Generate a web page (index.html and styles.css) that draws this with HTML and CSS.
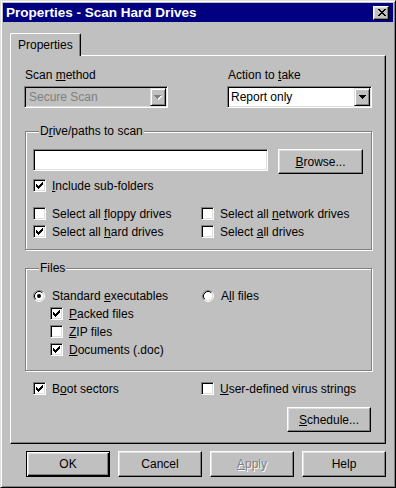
FILE: index.html
```html
<!DOCTYPE html>
<html>
<head>
<meta charset="utf-8">
<title>Properties - Scan Hard Drives</title>
<link rel="stylesheet" href="styles.css">
</head>
<body>
<div class="window">
  <div class="titlebar">
    <span class="title">Properties - Scan Hard Drives</span>
    <span class="close"><svg width="8" height="7" viewBox="0 0 8 7" shape-rendering="crispEdges"><path d="M0 0h2v1H0zM6 0h2v1H6zM1 1h2v1H1zM5 1h2v1H5zM2 2h4v1H2zM3 3h2v1H3zM2 4h4v1H2zM1 5h2v1H1zM5 5h2v1H5zM0 6h2v1H0zM6 6h2v1H6z" fill="#000"/></svg></span>
  </div>
  <div class="client">
    <div class="tabs"><div class="tab">Properties</div></div>
    <div class="panel">
      <div class="toprow">
        <div class="field f1">
          <div class="lbl">Scan <u>m</u>ethod</div>
          <div class="combo disabled">
            <span class="val">Secure Scan</span>
            <span class="arrow"><svg width="8" height="5" viewBox="0 0 8 5" shape-rendering="crispEdges"><path d="M1 1h7v1H1zM2 2h5v1H2zM3 3h3v1H3zM4 4h1v1H4z" fill="#fff"/><path d="M0 0h7v1H0zM1 1h5v1H1zM2 2h3v1H2zM3 3h1v1H3z" fill="#808080"/></svg></span>
          </div>
        </div>
        <div class="field f2">
          <div class="lbl">Action to <u>t</u>ake</div>
          <div class="combo">
            <span class="val">Report only</span>
            <span class="arrow"><svg width="7" height="4" viewBox="0 0 7 4" shape-rendering="crispEdges"><path d="M0 0h7v1H0zM1 1h5v1H1zM2 2h3v1H2zM3 3h1v1H3z" fill="#000"/></svg></span>
          </div>
        </div>
      </div>

      <div class="group drive">
        <div class="legend">D<u>r</u>ive/paths to scan</div>
        <div class="pathrow">
          <div class="textbox"></div>
          <div class="btn browse"><u>B</u>rowse...</div>
        </div>
        <div class="check sub"><span class="cb on"><svg width="7" height="7" viewBox="0 0 7 7" shape-rendering="crispEdges"><path d="M0 2h1v3H0zM1 3h1v3H1zM2 4h1v3H2zM3 3h1v3H3zM4 2h1v3H4zM5 1h1v3H5zM6 0h1v3H6z" fill="#000"/></svg></span><span class="txt"><u>I</u>nclude sub-folders</span></div>
        <div class="grid drives">
          <div class="check"><span class="cb"></span><span class="txt">Select all <u>f</u>loppy drives</span></div>
          <div class="check"><span class="cb"></span><span class="txt">Select all <u>n</u>etwork drives</span></div>
          <div class="check"><span class="cb on"><svg width="7" height="7" viewBox="0 0 7 7" shape-rendering="crispEdges"><path d="M0 2h1v3H0zM1 3h1v3H1zM2 4h1v3H2zM3 3h1v3H3zM4 2h1v3H4zM5 1h1v3H5zM6 0h1v3H6z" fill="#000"/></svg></span><span class="txt">Select all <u>h</u>ard drives</span></div>
          <div class="check"><span class="cb"></span><span class="txt">Select <u>a</u>ll drives</span></div>
        </div>
      </div>

      <div class="group files">
        <div class="legend">Files</div>
        <div class="grid filesgrid">
          <div class="col">
            <div class="check"><span class="rb"><svg width="12" height="12" viewBox="0 0 12 12"><circle cx="6" cy="6" r="4.5" fill="#fff"/><path d="M2.11 9.89A5.5 5.5 0 0 1 9.89 2.11" fill="none" stroke="#808080"/><path d="M9.89 2.11A5.5 5.5 0 0 1 2.11 9.89" fill="none" stroke="#fff"/><path d="M2.82 9.18A4.5 4.5 0 0 1 9.18 2.82" fill="none" stroke="#000"/><path d="M9.18 2.82A4.5 4.5 0 0 1 2.82 9.18" fill="none" stroke="#dfdfdf"/><circle cx="6" cy="6" r="2" fill="#000"/></svg></span><span class="txt">Standard <u>e</u>xecutables</span></div>
            <div class="check indent"><span class="cb on"><svg width="7" height="7" viewBox="0 0 7 7" shape-rendering="crispEdges"><path d="M0 2h1v3H0zM1 3h1v3H1zM2 4h1v3H2zM3 3h1v3H3zM4 2h1v3H4zM5 1h1v3H5zM6 0h1v3H6z" fill="#000"/></svg></span><span class="txt"><u>P</u>acked files</span></div>
            <div class="check indent"><span class="cb"></span><span class="txt"><u>Z</u>IP files</span></div>
            <div class="check indent"><span class="cb on"><svg width="7" height="7" viewBox="0 0 7 7" shape-rendering="crispEdges"><path d="M0 2h1v3H0zM1 3h1v3H1zM2 4h1v3H2zM3 3h1v3H3zM4 2h1v3H4zM5 1h1v3H5zM6 0h1v3H6z" fill="#000"/></svg></span><span class="txt"><u>D</u>ocuments (.doc)</span></div>
          </div>
          <div class="col">
            <div class="check allfiles"><span class="rb"><svg width="12" height="12" viewBox="0 0 12 12"><circle cx="6" cy="6" r="4.5" fill="#fff"/><path d="M2.11 9.89A5.5 5.5 0 0 1 9.89 2.11" fill="none" stroke="#808080"/><path d="M9.89 2.11A5.5 5.5 0 0 1 2.11 9.89" fill="none" stroke="#fff"/><path d="M2.82 9.18A4.5 4.5 0 0 1 9.18 2.82" fill="none" stroke="#000"/><path d="M9.18 2.82A4.5 4.5 0 0 1 2.82 9.18" fill="none" stroke="#dfdfdf"/></svg></span><span class="txt">A<u>l</u>l files</span></div>
          </div>
        </div>
      </div>

      <div class="grid opts">
        <div class="check"><span class="cb on"><svg width="7" height="7" viewBox="0 0 7 7" shape-rendering="crispEdges"><path d="M0 2h1v3H0zM1 3h1v3H1zM2 4h1v3H2zM3 3h1v3H3zM4 2h1v3H4zM5 1h1v3H5zM6 0h1v3H6z" fill="#000"/></svg></span><span class="txt">B<u>o</u>ot sectors</span></div>
        <div class="check"><span class="cb"></span><span class="txt"><u>U</u>ser-defined virus strings</span></div>
      </div>

      <div class="schedrow"><div class="btn sched"><u>S</u>chedule...</div></div>
    </div>

    <div class="buttons">
      <div class="btn dlg default">OK</div>
      <div class="btn dlg">Cancel</div>
      <div class="btn dlg disabledtxt"><u>A</u>pply</div>
      <div class="btn dlg">Help</div>
    </div>
  </div>
</div>
</body>
</html>
```

FILE: styles.css
```css
* { box-sizing: border-box; }
html, body { margin: 0; padding: 0; background: #c0c0c0; }
body {
  font-family: "Liberation Sans", Arial, sans-serif;
  font-size: 12px;
  line-height: 14px;
  color: #000;
}
u { text-decoration: underline; text-underline-offset: 1px; }

.window {
  width: 396px;
  height: 488px;
  background: #c0c0c0;
  border: 1px solid;
  border-color: #dfdfdf #000 #000 #dfdfdf;
  box-shadow: inset 1px 1px #fff, inset -1px -1px #808080;
  padding: 2px;
  display: flex;
  flex-direction: column;
}

.titlebar {
  height: 19px;
  background: #000080;
  display: flex;
  align-items: center;
  padding-left: 3px;
  padding-right: 4px;
}
.title {
  flex: 1;
  color: #fff;
  font-weight: bold;
  font-size: 13.5px;
  line-height: 16px;
  white-space: nowrap;
}
.close {
  width: 16px;
  height: 14px;
  background: #c0c0c0;
  border: 1px solid;
  border-color: #fff #000 #000 #fff;
  box-shadow: inset -1px -1px #808080, inset 1px 1px #dfdfdf;
  display: flex;
  align-items: center;
  justify-content: center;
  padding-left: 1px;
}
.close svg { display: block; }

.client {
  flex: 1;
  padding: 0 7px;
  display: flex;
  flex-direction: column;
}

.tabs {
  margin-top: 11px;
  height: 23px;
  margin-bottom: -1px;
  display: flex;
  position: relative;
  z-index: 1;
}
.tab {
  width: 71px;
  height: 23px;
  background: #c0c0c0;
  border-top: 1px solid #fff;
  border-left: 1px solid #fff;
  border-right: 1px solid #000;
  border-radius: 2px 2px 0 0;
  box-shadow: inset -1px 0 #808080;
  padding: 4px 0 0 7px;
}

.panel {
  height: 389px;
  border: 1px solid;
  border-color: #fff #000 #000 #fff;
  box-shadow: inset -1px -1px #808080;
  padding: 12px 13px 0 13px;
  display: flex;
  flex-direction: column;
}

.toprow {
  display: flex;
  justify-content: space-between;
}
.f1 { width: 144px; }
.f2 { width: 145px; }
.lbl { padding-left: 1px; }
.combo {
  margin-top: 4px;
  height: 22px;
  background: #fff;
  border: 1px solid;
  border-color: #808080 #fff #fff #808080;
  box-shadow: inset 1px 1px #000, inset -1px -1px #dfdfdf;
  padding: 1px;
  display: flex;
}
.combo .val {
  flex: 1;
  padding-left: 2px;
  line-height: 18px;
  white-space: nowrap;
}
.combo.disabled { background: #c0c0c0; }
.combo.disabled .val { color: #808080; padding-left: 3px; }
.arrow {
  width: 16px;
  height: 18px;
  background: #c0c0c0;
  border: 1px solid;
  border-color: #dfdfdf #000 #000 #dfdfdf;
  box-shadow: inset 1px 1px #fff, inset -1px -1px #808080;
  display: flex;
  align-items: center;
  justify-content: center;
}
.arrow svg { display: block; }

.group {
  margin-left: 1px;
  border: 1px solid #808080;
  box-shadow: inset 1px 1px #fff, 1px 1px #fff;
  display: flex;
  flex-direction: column;
}
.legend {
  width: max-content;
  margin: -8px 0 0 6px;
  padding: 0 1px;
  background: #c0c0c0;
}
.drive {
  margin-top: 23px;
  padding: 0 8px 11px 7px;
}
.pathrow {
  margin-top: 11px;
  display: flex;
  align-items: flex-start;
}
.textbox {
  width: 235px;
  height: 22px;
  background: #fff;
  border: 1px solid;
  border-color: #808080 #fff #fff #808080;
  box-shadow: inset 1px 1px #000, inset -1px -1px #dfdfdf;
  margin-right: 10px;
}
.btn {
  background: #c0c0c0;
  border: 1px solid;
  border-color: #fff #000 #000 #fff;
  box-shadow: inset -1px -1px #808080, inset 1px 1px #dfdfdf;
  display: flex;
  align-items: center;
  justify-content: center;
  white-space: nowrap;
}
.browse { width: 85px; height: 25px; }

.check {
  display: flex;
  align-items: center;
  height: 13px;
  white-space: nowrap;
}
.check .txt { margin-left: 6px; }
.cb {
  flex: none;
  width: 13px;
  height: 13px;
  background: #fff;
  border: 1px solid;
  border-color: #808080 #fff #fff #808080;
  box-shadow: inset 1px 1px #000, inset -1px -1px #dfdfdf;
  padding: 2px;
}
.cb svg { display: block; }
.rb {
  flex: none;
  width: 13px;
  height: 13px;
  display: flex;
  align-items: center;
}
.rb svg { display: block; }

.sub { margin-top: 5px; }
.grid {
  display: grid;
  grid-template-columns: 168px auto;
  row-gap: 5px;
}
.drives { margin-top: 15px; }

.files {
  margin-top: 18px;
  padding: 0 8px 14px 7px;
}
.filesgrid { margin-top: 14px; }
.col {
  display: flex;
  flex-direction: column;
  gap: 5px;
}
.indent { margin-left: 17px; }
.allfiles { margin-left: 1px; }

.opts {
  margin-top: 11px;
  padding-left: 9px;
}

.schedrow {
  margin-top: 12px;
  display: flex;
  justify-content: flex-end;
  padding-right: 1px;
}
.sched { width: 84px; height: 25px; }

.buttons {
  margin-top: 7px;
  display: flex;
  justify-content: flex-end;
  gap: 8px;
}
.dlg { width: 84px; height: 26px; }
.default {
  border: 1px solid #000;
  box-shadow: inset 1px 1px #fff, inset -1px -1px #000, inset -2px -2px #808080, inset 2px 2px #dfdfdf;
}
.disabledtxt { color: #808080; text-shadow: 1px 1px #fff; }
```
